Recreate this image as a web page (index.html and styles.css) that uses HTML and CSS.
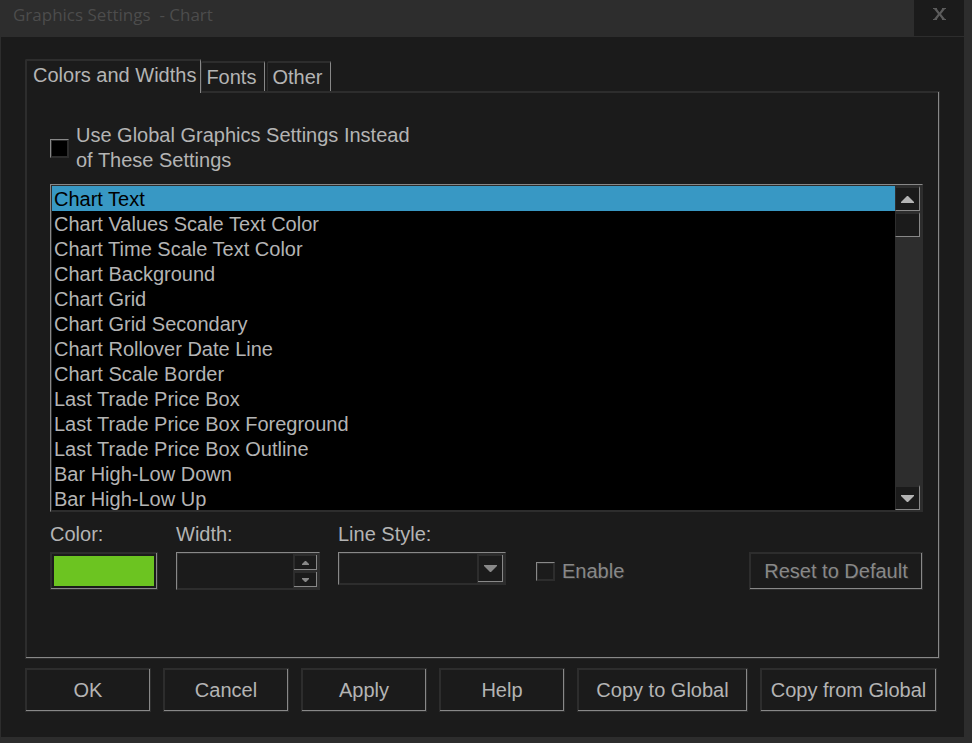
FILE: index.html
```html
<!DOCTYPE html>
<html lang="en">
<head>
	<meta charset="utf-8">
	<title>Graphics Settings - Chart</title>
	<link rel="stylesheet" href="styles.css">
</head>
<body>
	<div class="window">
		<header class="titlebar">
			<h1>Graphics Settings&nbsp; - Chart</h1>
			<button type="button" class="close" aria-label="Close">
				<svg width="13" height="12" viewBox="0 0 13 12"><path d="M0 0h4v1l2.500 3.500L9 1V0h4v1h-1L8 6l4 5h1v1H9v-1L6.500 7.500 4 11v1H0v-1h1l4-5L1 1H0z"/></svg>
			</button>
		</header>
		<form class="content">
			<div class="tabs" role="tablist">
				<button type="button" class="tab on" role="tab" aria-selected="true">Colors and Widths</button>
				<button type="button" class="tab" role="tab">Fonts</button>
				<button type="button" class="tab" role="tab">Other</button>
			</div>
			<div class="panel raised">
				<div class="global">
					<input type="checkbox" id="use-global" class="check sunken">
					<label for="use-global">Use Global Graphics Settings Instead<br>of These Settings</label>
				</div>
				<div class="list sunken">
					<select class="items" size="13" aria-label="Graphics items">
						<option selected>Chart Text</option>
						<option>Chart Values Scale Text Color</option>
						<option>Chart Time Scale Text Color</option>
						<option>Chart Background</option>
						<option>Chart Grid</option>
						<option>Chart Grid Secondary</option>
						<option>Chart Rollover Date Line</option>
						<option>Chart Scale Border</option>
						<option>Last Trade Price Box</option>
						<option>Last Trade Price Box Foreground</option>
						<option>Last Trade Price Box Outline</option>
						<option>Bar High-Low Down</option>
						<option>Bar High-Low Up</option>
					</select>
					<div class="scrollbar">
						<button type="button" class="scroll-btn" aria-label="Scroll up">
							<svg width="13" height="7" viewBox="0 0 13 7"><path d="M6 0h1l6 6v1H0V6z"/></svg>
						</button>
						<div class="scroll-btn thumb"></div>
						<button type="button" class="scroll-btn down" aria-label="Scroll down">
							<svg width="13" height="7" viewBox="0 0 13 7"><path d="M0 0h13v1L7 7H6L0 1z"/></svg>
						</button>
					</div>
				</div>
				<div class="options">
					<div class="field">
						<label for="color">Color:</label>
						<button type="button" id="color" class="swatch raised"><span></span></button>
					</div>
					<div class="field">
						<label for="width">Width:</label>
						<div class="spinner sunken">
							<input type="text" id="width" disabled>
							<div class="spin">
								<button type="button" class="raised" aria-label="Increase" disabled>
									<svg width="7" height="4" viewBox="0 0 7 4"><path d="M3 0h1l3 3v1H0V3z"/></svg>
								</button>
								<button type="button" class="raised" aria-label="Decrease" disabled>
									<svg width="7" height="4" viewBox="0 0 7 4"><path d="M0 0h7v1L4 4H3L0 1z"/></svg>
								</button>
							</div>
						</div>
					</div>
					<div class="field">
						<label for="line-style">Line Style:</label>
						<div class="combo sunken">
							<select id="line-style" disabled></select>
							<span class="combo-btn raised">
								<svg width="13" height="7" viewBox="0 0 13 7"><path d="M0 0h13v1L7 7H6L0 1z"/></svg>
							</span>
						</div>
					</div>
					<div class="enable">
						<input type="checkbox" id="enable" class="check sunken" disabled>
						<label for="enable">Enable</label>
					</div>
					<button type="button" class="reset raised" disabled>Reset to Default</button>
				</div>
			</div>
			<div class="buttons">
				<button type="button" class="btn raised">OK</button>
				<button type="button" class="btn raised">Cancel</button>
				<button type="button" class="btn raised">Apply</button>
				<button type="button" class="btn raised">Help</button>
				<button type="button" class="btn copy-to raised">Copy to Global</button>
				<button type="button" class="btn copy-from raised">Copy from Global</button>
			</div>
		</form>
	</div>
</body>
</html>
```

FILE: styles.css
```css
* {
	box-sizing: border-box;
	margin: 0;
	padding: 0;
}
body {
	font-family: "Liberation Sans", Arial, sans-serif;
	font-size: 20px;
	line-height: 25px;
	color: #b4b4b4;
	background-color: #1b1b1b;
}
button, input, select {
	font: inherit;
	color: inherit;
	border: 0;
	border-radius: 0;
	outline: none;
	background-color: #1b1b1b;
	appearance: none;
}
svg {
	display: block;
	fill: #b4b4b4;
}
.raised {
	border: 1px solid #2d2d2d;
	box-shadow: inset -1px -1px #888, inset 1px 1px #2d2d2d;
}
.sunken {
	border: 1px solid;
	border-color: #888 #2d2d2d #2d2d2d #888;
	box-shadow: inset 0 0 0 1px #2d2d2d;
}
.window {
	display: flex;
	flex-direction: column;
	min-height: 100vh;
	border: solid #2d2d2d;
	border-width: 0 8px 6px 1px;
}
.titlebar {
	display: flex;
	justify-content: space-between;
	height: 37px;
	border-bottom: 1px solid #2d2d2d;
	background-color: #2d2d2d;
}
.titlebar h1 {
	padding-left: 12px;
	font: 17px/30px "Open Sans", "Noto Sans", sans-serif;
	color: #4c4c4c;
}
.close {
	display: flex;
	justify-content: center;
	width: 50px;
	padding-top: 8px;
}
.close svg {
	fill: #5c5c5c;
}
.content {
	flex: 1;
	display: flex;
	flex-direction: column;
	padding: 22px 24px 25px;
}

/* tabs */
.tabs {
	display: flex;
	align-items: flex-end;
	height: 32px;
}
.tab {
	height: 30px;
	margin-right: 2px;
	padding: 0 8px 0 4px;
	border: solid #2d2d2d;
	border-width: 2px 1px 0;
	border-right-color: #888;
	border-radius: 2px 0 0 0;
}
.tab.on {
	z-index: 1;
	height: 34px;
	margin: 0 0 -2px;
	padding: 0 4px 3px 6px;
	border-left-width: 2px;
}
.panel {
	flex: 1;
	padding: 31px 16px 0 24px;
}
.global, .enable {
	display: flex;
	align-items: center;
	gap: 7px;
}
.check {
	width: 19px;
	height: 19px;
	background-color: #000;
}

/* list */
.list {
	display: flex;
	height: 328px;
	margin: 11px 0 10px;
	padding: 1px;
	background-color: #000;
}
.items {
	flex: 1;
	height: 324px;
	overflow: hidden;
	background-color: #000;
}
.items option {
	min-height: 25px;
	padding: 2px 2px 0;
}
.items option:checked {
	color: #000;
	background: linear-gradient(#3898c4, #3898c4);
}
.scrollbar {
	display: flex;
	flex-direction: column;
	gap: 1px;
	width: 26px;
	padding-right: 1px;
	background-color: #2d2d2d;
}
.scroll-btn {
	display: flex;
	align-items: center;
	justify-content: center;
	height: 25px;
	border: solid #2d2d2d;
	border-width: 2px 1px 1px;
	border-right-color: #888;
	border-bottom-color: #888;
	background-color: #1b1b1b;
}
.scroll-btn.down {
	margin-top: auto;
}

/* options under the list */
.options {
	display: flex;
	align-items: flex-end;
	gap: 18px;
}
.field {
	display: flex;
	flex-direction: column;
	align-self: flex-start;
	gap: 5px;
}
.swatch {
	display: flex;
	width: 108px;
	height: 38px;
	padding: 3px;
}
.swatch span {
	flex: 1;
	background-color: #6cc421;
}
.spinner {
	display: flex;
	width: 144px;
	height: 38px;
	padding: 1px;
}
.spinner input {
	flex: 1;
	min-width: 0;
}
.spin {
	display: flex;
	flex-direction: column;
	width: 25px;
}
.spin button {
	flex: 1;
	display: flex;
	align-items: center;
	justify-content: center;
}
.options svg {
	fill: #888;
}
.combo {
	display: flex;
	width: 168px;
	height: 33px;
	padding: 1px;
}
.combo select {
	flex: 1;
	min-width: 0;
	opacity: 1;
}
.combo-btn {
	display: flex;
	align-items: center;
	justify-content: center;
	width: 27px;
}
.enable {
	height: 38px;
	margin-left: 12px;
	color: #888;
	text-shadow: 1px 1px #2d2d2d;
}
.enable .check {
	background-color: #1b1b1b;
}
.reset {
	width: 174px;
	height: 38px;
	margin-left: auto;
	color: #888;
	text-shadow: 1px 1px #2d2d2d;
}

.buttons {
	display: flex;
	gap: 12px;
	margin-top: 9px;
}
.btn {
	width: 126px;
	height: 44px;
}
.copy-to {
	width: 171px;
}
.copy-from {
	width: 177px;
}
```
